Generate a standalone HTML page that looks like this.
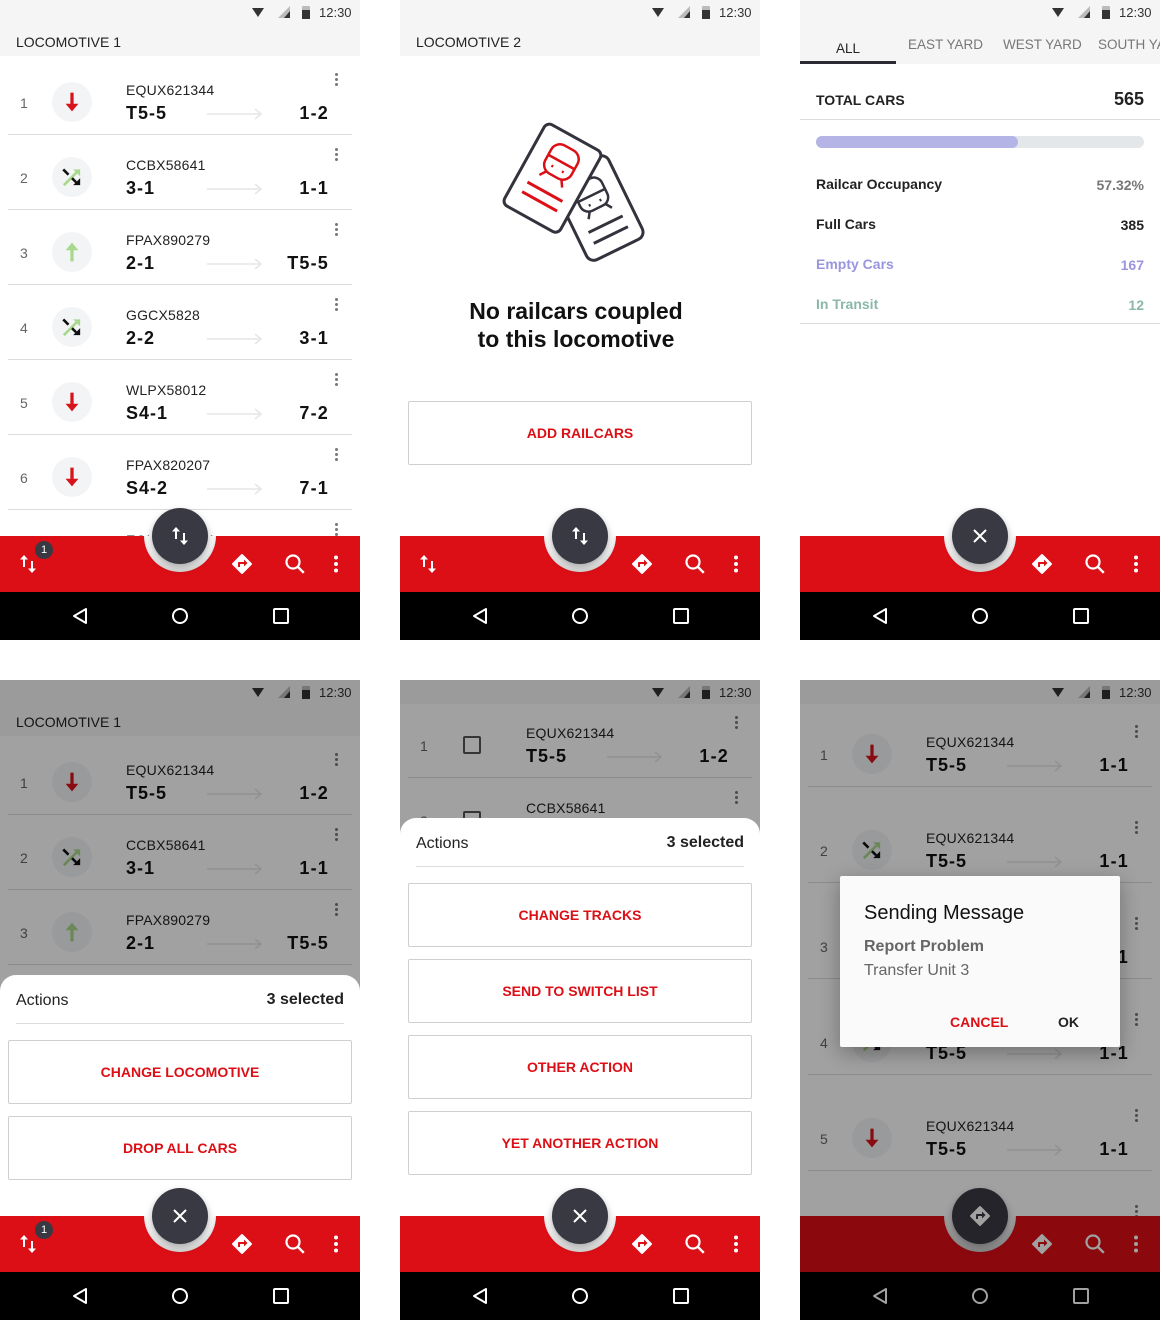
<!DOCTYPE html>
<html><head><meta charset="utf-8">
<style>
*{box-sizing:border-box;margin:0;padding:0}
body{width:1160px;height:1320px;background:#fff;position:relative;overflow:hidden;font-family:"Liberation Sans",Arial,sans-serif;color:#212121}
.s{position:absolute;width:360px;height:640px;overflow:hidden;background:#fff}
.sb{position:absolute;left:0;top:0;width:360px;height:24px;background:#f5f5f5}
.sb svg{position:absolute;left:248px;top:5px}
.sb b{position:absolute;left:319px;top:5px;font-weight:normal;font-size:13px;color:#333}
.hd{position:absolute;left:0;top:24px;width:360px;height:32px;background:#f5f5f5;font-size:14px;padding:10px 16px;color:#222}
.r{position:absolute;left:0;width:360px}
.c{position:absolute;left:0;bottom:0;width:360px;height:75px}
.c:after{content:"";position:absolute;left:8px;right:8px;bottom:0;height:1px;background:#dcdcdc}
.n{position:absolute;left:20px;top:35px;font-size:14px;color:#666}
.ic{position:absolute;left:52px;top:22px;width:40px;height:40px;border-radius:50%;background:#f3f4f6}
.ic svg{position:absolute;left:6px;top:6px;width:28px;height:28px}
.cb{position:absolute;left:63px;top:33px;width:18px;height:18px;border:2px solid #555;border-radius:2px}
.id{position:absolute;left:126px;top:22px;font-size:14px;color:#222;letter-spacing:.2px}
.bg{position:absolute;left:126px;top:43px;font-size:18px;font-weight:bold;color:#111;letter-spacing:1px}
.ds{position:absolute;right:31px;top:43px;font-size:18px;font-weight:bold;color:#111;letter-spacing:1.2px}
.ar{position:absolute;left:207px;top:48px}
.kb{position:absolute;left:335px;top:13px;width:3px;height:3px;border-radius:50%;background:#777;box-shadow:0 5px #777,0 10px #777}
.bar{position:absolute;left:0;top:536px;width:360px;height:56px;background:#dc0f16;overflow:hidden}
.notch{position:absolute;left:144px;top:-36px;width:72px;height:72px;border-radius:50%;background:#fff;box-shadow:inset 0 -3px 4px rgba(0,0,0,.15)}
.bar svg{position:absolute}
.badge{position:absolute;left:35px;top:5px;width:18px;height:18px;border-radius:50%;background:#393943;color:#fff;font-size:11px;text-align:center;line-height:18px}
.fab{position:absolute;left:152px;top:508px;width:56px;height:56px;border-radius:50%;background:#393943;box-shadow:0 4px 8px rgba(0,0,0,.35)}
.fab svg{position:absolute;left:16px;top:16px}
.nav{position:absolute;left:0;top:592px;width:360px;height:48px;background:#000}
.nav svg{position:absolute;left:0;top:0}
.dim{position:absolute;left:0;top:0;width:360px;height:640px;background:rgba(0,0,0,.37)}
.sheet{position:absolute;left:0;width:360px;height:400px;background:#fff;border-radius:16px 16px 0 0}
.sheet .t1{position:absolute;left:16px;top:17px;font-size:16px;color:#222}
.sheet .t2{position:absolute;right:16px;top:16px;font-size:16px;font-weight:bold;color:#222}
.sheet .ln{position:absolute;left:16px;right:16px;top:48px;height:1px;background:#dcdcdc}
.btn{position:absolute;left:8px;width:344px;height:64px;border:1px solid #cfcfcf;border-radius:2px;color:#dc0f16;font-size:14px;font-weight:bold;text-align:center;line-height:62px}
.tab{position:absolute;font-size:13.5px;color:#777;top:37px}
.st{position:absolute;left:16px;font-size:14px;font-weight:bold}
.sv{position:absolute;right:16px;font-size:14px;font-weight:bold}
</style></head><body>
<svg width="0" height="0" style="position:absolute">
<defs>
<symbol id="down" viewBox="0 0 24 24"><path d="M10.6 4h2.8v9.5h4.1L12 20l-5.5-6.5h4.1z" fill="#d7141c"/></symbol>
<symbol id="up" viewBox="0 0 24 24"><path d="M10.6 20h2.8v-9.5h4.1L12 4l-5.5 6.5h4.1z" fill="#a8d88c"/></symbol>
<symbol id="shuf" viewBox="0 0 24 24"><path d="M5 19L17.5 6.5" stroke="#a8d88c" stroke-width="2.2"/><path d="M13 5.5h6v6z" fill="#a8d88c"/><path d="M4.5 5.5l4.5 4.5M12 13l3.5 3.5" stroke="#111" stroke-width="2.2"/><path d="M19 19h-6l6-6z" fill="#111"/></symbol>
<symbol id="arr" viewBox="0 0 56 12"><path d="M0 6h54M48 1l6 5-6 5" fill="none" stroke="#e6e6e6" stroke-width="1.5"/></symbol>
<symbol id="swap" viewBox="0 0 24 24"><path d="M8 3L4 7.5h3V15h2V7.5h3zM16 21l4-4.5h-3V9h-2v7.5h-3z" fill="#fff"/></symbol>
<symbol id="dir" viewBox="0 0 24 24"><path d="M21.7 11.3l-9-9a1 1 0 00-1.4 0l-9 9a1 1 0 000 1.4l9 9a1 1 0 001.4 0l9-9a1 1 0 000-1.4zM14 14.5V12h-4v3H8v-4c0-.55.45-1 1-1h5V7.5l3.5 3.5z" fill="#fff"/></symbol>
<symbol id="srch" viewBox="0 0 24 24"><circle cx="10" cy="10" r="6.5" fill="none" stroke="#fff" stroke-width="2.2"/><path d="M14.8 14.8l6 6" stroke="#fff" stroke-width="2.4"/></symbol>
<symbol id="more" viewBox="0 0 24 24"><circle cx="12" cy="5.5" r="2" fill="#fff"/><circle cx="12" cy="12" r="2" fill="#fff"/><circle cx="12" cy="18.5" r="2" fill="#fff"/></symbol>
<symbol id="x" viewBox="0 0 24 24"><path d="M6 6l12 12M18 6L6 18" stroke="#fff" stroke-width="2"/></symbol>
<symbol id="stat" viewBox="0 0 70 14"><path d="M4 3h12l-6 9z" fill="#333"/><path d="M30 13h12V1z" fill="#bbb"/><path d="M36 13h6V6z" fill="#333"/><rect x="54" y="1" width="8" height="13" rx="1" fill="#bbb"/><rect x="54" y="5" width="8" height="9" fill="#333"/></symbol>
<symbol id="navi" viewBox="0 0 360 48"><path d="M86 17v14l-12-7z" fill="none" stroke="#fff" stroke-width="2" stroke-linejoin="round"/><circle cx="180" cy="24" r="7" fill="none" stroke="#fff" stroke-width="2"/><rect x="274" y="17" width="14" height="14" rx="1" fill="none" stroke="#fff" stroke-width="2"/></symbol>
</defs></svg>

<!-- SCREEN 1 -->
<div class="s" style="left:0;top:0">
<div class="sb"><svg width="70" height="14"><use href="#stat"/></svg><b>12:30</b></div>
<div class="hd">LOCOMOTIVE 1</div>
<div class="r" style="top:60px;height:75px"><div class="c"><span class="n">1</span><span class="ic"><svg><use href="#down"/></svg></span><span class="id">EQUX621344</span><span class="bg">T5-5</span><svg class="ar" width="56" height="12"><use href="#arr"/></svg><span class="ds">1-2</span><i class="kb"></i></div></div>
<div class="r" style="top:135px;height:75px"><div class="c"><span class="n">2</span><span class="ic"><svg><use href="#shuf"/></svg></span><span class="id">CCBX58641</span><span class="bg">3-1</span><svg class="ar" width="56" height="12"><use href="#arr"/></svg><span class="ds">1-1</span><i class="kb"></i></div></div>
<div class="r" style="top:210px;height:75px"><div class="c"><span class="n">3</span><span class="ic"><svg><use href="#up"/></svg></span><span class="id">FPAX890279</span><span class="bg">2-1</span><svg class="ar" width="56" height="12"><use href="#arr"/></svg><span class="ds">T5-5</span><i class="kb"></i></div></div>
<div class="r" style="top:285px;height:75px"><div class="c"><span class="n">4</span><span class="ic"><svg><use href="#shuf"/></svg></span><span class="id">GGCX5828</span><span class="bg">2-2</span><svg class="ar" width="56" height="12"><use href="#arr"/></svg><span class="ds">3-1</span><i class="kb"></i></div></div>
<div class="r" style="top:360px;height:75px"><div class="c"><span class="n">5</span><span class="ic"><svg><use href="#down"/></svg></span><span class="id">WLPX58012</span><span class="bg">S4-1</span><svg class="ar" width="56" height="12"><use href="#arr"/></svg><span class="ds">7-2</span><i class="kb"></i></div></div>
<div class="r" style="top:435px;height:75px"><div class="c"><span class="n">6</span><span class="ic"><svg><use href="#down"/></svg></span><span class="id">FPAX820207</span><span class="bg">S4-2</span><svg class="ar" width="56" height="12"><use href="#arr"/></svg><span class="ds">7-1</span><i class="kb"></i></div></div>
<div class="r" style="top:510px;height:75px"><div class="c"><span class="id">EQUX621344</span><i class="kb"></i></div></div>
<div class="bar"><div class="notch"></div><svg style="left:16px;top:16px" width="24" height="24"><use href="#swap"/></svg><div class="badge">1</div><svg style="left:230px;top:16px" width="24" height="24"><use href="#dir"/></svg><svg style="left:283px;top:16px" width="24" height="24"><use href="#srch"/></svg><svg style="left:324px;top:16px" width="24" height="24"><use href="#more"/></svg></div>
<div class="fab"><svg width="24" height="24"><use href="#swap"/></svg></div>
<div class="nav"><svg width="360" height="48"><use href="#navi"/></svg></div>
</div>

<!-- SCREEN 2 -->
<div class="s" style="left:400px;top:0">
<div class="sb"><svg width="70" height="14"><use href="#stat"/></svg><b>12:30</b></div>
<div class="hd">LOCOMOTIVE 2</div>
<svg style="position:absolute;left:0;top:0" width="360" height="300">
<g transform="translate(190,263) rotate(-26)"><rect x="0" y="-92" width="62" height="92" rx="8" fill="#fff" stroke="#33333d" stroke-width="3"/>
<rect x="16" y="-76" width="30" height="30" rx="9" fill="none" stroke="#33333d" stroke-width="2.5"/><path d="M16-60h30M24-52h2M36-52h2M22-46l-4 6M40-46l4 6" stroke="#33333d" stroke-width="2.5" fill="none"/>
<path d="M12-28h38M12-16h38" stroke="#33333d" stroke-width="3"/></g>
<g transform="translate(147,122) rotate(29)"><rect x="0" y="0" width="64" height="93" rx="6" fill="#fff" stroke="#33333d" stroke-width="3"/>
<rect x="17" y="12" width="30" height="32" rx="10" fill="none" stroke="#dc0f16" stroke-width="2.5"/><path d="M17 28h30M25 36h2M37 36h2M23 44l-4 6M41 44l4 6" stroke="#dc0f16" stroke-width="2.5" fill="none"/>
<path d="M12 62h40M12 73h40" stroke="#dc0f16" stroke-width="3"/></g>
</svg>
<div style="position:absolute;left:-4px;width:360px;top:297px;text-align:center;font-size:23px;font-weight:bold;line-height:28px;color:#111">No railcars coupled<br>to this locomotive</div>
<div class="btn" style="top:401px">ADD RAILCARS</div>
<div class="bar"><div class="notch"></div><svg style="left:16px;top:16px" width="24" height="24"><use href="#swap"/></svg><svg style="left:230px;top:16px" width="24" height="24"><use href="#dir"/></svg><svg style="left:283px;top:16px" width="24" height="24"><use href="#srch"/></svg><svg style="left:324px;top:16px" width="24" height="24"><use href="#more"/></svg></div>
<div class="fab"><svg width="24" height="24"><use href="#swap"/></svg></div>
<div class="nav"><svg width="360" height="48"><use href="#navi"/></svg></div>
</div>

<!-- SCREEN 3 -->
<div class="s" style="left:800px;top:0">
<div class="sb"><svg width="70" height="14"><use href="#stat"/></svg><b>12:30</b></div>
<div style="position:absolute;left:0;top:24px;width:360px;height:40px;background:#f5f5f5"></div>
<div class="tab" style="left:36px;top:41px;color:#222">ALL</div>
<div style="position:absolute;left:0;top:61px;width:96px;height:3px;background:#2a2a35"></div>
<div class="tab" style="left:108px">EAST YARD</div>
<div class="tab" style="left:203px">WEST YARD</div>
<div class="tab" style="left:298px;white-space:nowrap">SOUTH YARD</div>
<div class="st" style="top:92px;color:#222">TOTAL CARS</div>
<div class="sv" style="top:89px;font-size:18px;color:#222">565</div>
<div style="position:absolute;left:0;top:119px;width:360px;height:1px;background:#dcdcdc"></div>
<div style="position:absolute;left:16px;top:136px;width:328px;height:12px;border-radius:6px;background:#e3e7ea"><div style="width:202px;height:12px;border-radius:6px;background:#b4b4e6"></div></div>
<div class="st" style="top:176px;color:#222">Railcar Occupancy</div><div class="sv" style="top:177px;color:#777">57.32%</div>
<div class="st" style="top:216px;color:#222">Full Cars</div><div class="sv" style="top:217px;color:#222">385</div>
<div class="st" style="top:256px;color:#9b95e0">Empty Cars</div><div class="sv" style="top:257px;color:#9b95e0">167</div>
<div class="st" style="top:296px;color:#8ab8a8">In Transit</div><div class="sv" style="top:297px;color:#8ab8a8">12</div>
<div style="position:absolute;left:0;top:323px;width:360px;height:1px;background:#dcdcdc"></div>
<div class="bar"><div class="notch"></div><svg style="left:230px;top:16px" width="24" height="24"><use href="#dir"/></svg><svg style="left:283px;top:16px" width="24" height="24"><use href="#srch"/></svg><svg style="left:324px;top:16px" width="24" height="24"><use href="#more"/></svg></div>
<div class="fab"><svg width="24" height="24"><use href="#x"/></svg></div>
<div class="nav"><svg width="360" height="48"><use href="#navi"/></svg></div>
</div>

<!-- SCREEN 4 -->
<div class="s" style="left:0;top:680px">
<div class="sb"><svg width="70" height="14"><use href="#stat"/></svg><b>12:30</b></div>
<div class="hd">LOCOMOTIVE 1</div>
<div class="r" style="top:60px;height:75px"><div class="c"><span class="n">1</span><span class="ic"><svg><use href="#down"/></svg></span><span class="id">EQUX621344</span><span class="bg">T5-5</span><svg class="ar" width="56" height="12"><use href="#arr"/></svg><span class="ds">1-2</span><i class="kb"></i></div></div>
<div class="r" style="top:135px;height:75px"><div class="c"><span class="n">2</span><span class="ic"><svg><use href="#shuf"/></svg></span><span class="id">CCBX58641</span><span class="bg">3-1</span><svg class="ar" width="56" height="12"><use href="#arr"/></svg><span class="ds">1-1</span><i class="kb"></i></div></div>
<div class="r" style="top:210px;height:75px"><div class="c"><span class="n">3</span><span class="ic"><svg><use href="#up"/></svg></span><span class="id">FPAX890279</span><span class="bg">2-1</span><svg class="ar" width="56" height="12"><use href="#arr"/></svg><span class="ds">T5-5</span><i class="kb"></i></div></div>
<div class="dim"></div>
<div class="sheet" style="top:295px"><span class="t1">Actions</span><span class="t2">3 selected</span><div class="ln"></div>
<div class="btn" style="top:65px">CHANGE LOCOMOTIVE</div><div class="btn" style="top:141px">DROP ALL CARS</div></div>
<div class="bar"><div class="notch"></div><svg style="left:16px;top:16px" width="24" height="24"><use href="#swap"/></svg><div class="badge">1</div><svg style="left:230px;top:16px" width="24" height="24"><use href="#dir"/></svg><svg style="left:283px;top:16px" width="24" height="24"><use href="#srch"/></svg><svg style="left:324px;top:16px" width="24" height="24"><use href="#more"/></svg></div>
<div class="fab"><svg width="24" height="24"><use href="#x"/></svg></div>
<div class="nav"><svg width="360" height="48"><use href="#navi"/></svg></div>
</div>

<!-- SCREEN 5 -->
<div class="s" style="left:400px;top:680px">
<div class="sb"><svg width="70" height="14"><use href="#stat"/></svg><b>12:30</b></div>
<div class="r" style="top:23px;height:75px"><div class="c"><span class="n">1</span><span class="cb"></span><span class="id">EQUX621344</span><span class="bg">T5-5</span><svg class="ar" width="56" height="12"><use href="#arr"/></svg><span class="ds">1-2</span><i class="kb"></i></div></div>
<div class="r" style="top:98px;height:75px"><div class="c"><span class="n">2</span><span class="cb"></span><span class="id">CCBX58641</span><span class="bg">3-1</span><i class="kb"></i></div></div>
<div class="dim"></div>
<div class="sheet" style="top:138px"><span class="t1">Actions</span><span class="t2">3 selected</span><div class="ln"></div>
<div class="btn" style="top:65px">CHANGE TRACKS</div><div class="btn" style="top:141px">SEND TO SWITCH LIST</div><div class="btn" style="top:217px">OTHER ACTION</div><div class="btn" style="top:293px">YET ANOTHER ACTION</div></div>
<div class="bar"><div class="notch"></div><svg style="left:230px;top:16px" width="24" height="24"><use href="#dir"/></svg><svg style="left:283px;top:16px" width="24" height="24"><use href="#srch"/></svg><svg style="left:324px;top:16px" width="24" height="24"><use href="#more"/></svg></div>
<div class="fab"><svg width="24" height="24"><use href="#x"/></svg></div>
<div class="nav"><svg width="360" height="48"><use href="#navi"/></svg></div>
</div>

<!-- SCREEN 6 -->
<div class="s" style="left:800px;top:680px">
<div class="sb"><svg width="70" height="14"><use href="#stat"/></svg><b>12:30</b></div>
<div class="r" style="top:11px;height:96px"><div class="c"><span class="n">1</span><span class="ic"><svg><use href="#down"/></svg></span><span class="id">EQUX621344</span><span class="bg">T5-5</span><svg class="ar" width="56" height="12"><use href="#arr"/></svg><span class="ds">1-1</span><i class="kb"></i></div></div>
<div class="r" style="top:107px;height:96px"><div class="c"><span class="n">2</span><span class="ic"><svg><use href="#shuf"/></svg></span><span class="id">EQUX621344</span><span class="bg">T5-5</span><svg class="ar" width="56" height="12"><use href="#arr"/></svg><span class="ds">1-1</span><i class="kb"></i></div></div>
<div class="r" style="top:203px;height:96px"><div class="c"><span class="n">3</span><span class="ic"><svg><use href="#up"/></svg></span><span class="id">EQUX621344</span><span class="bg">T5-5</span><svg class="ar" width="56" height="12"><use href="#arr"/></svg><span class="ds">1-1</span><i class="kb"></i></div></div>
<div class="r" style="top:299px;height:96px"><div class="c"><span class="n">4</span><span class="ic"><svg><use href="#shuf"/></svg></span><span class="id">EQUX621344</span><span class="bg">T5-5</span><svg class="ar" width="56" height="12"><use href="#arr"/></svg><span class="ds">1-1</span><i class="kb"></i></div></div>
<div class="r" style="top:395px;height:96px"><div class="c"><span class="n">5</span><span class="ic"><svg><use href="#down"/></svg></span><span class="id">EQUX621344</span><span class="bg">T5-5</span><svg class="ar" width="56" height="12"><use href="#arr"/></svg><span class="ds">1-1</span><i class="kb"></i></div></div>
<div class="r" style="top:491px;height:96px"><div class="c"><span class="id">EQUX621344</span><i class="kb"></i></div></div>
<div class="bar"><div class="notch"></div><svg style="left:230px;top:16px" width="24" height="24"><use href="#dir"/></svg><svg style="left:283px;top:16px" width="24" height="24"><use href="#srch"/></svg><svg style="left:324px;top:16px" width="24" height="24"><use href="#more"/></svg></div>
<div class="fab"><svg width="24" height="24"><use href="#dir"/></svg></div>
<div class="nav"><svg width="360" height="48"><use href="#navi"/></svg></div>
<div class="dim"></div>
<div style="position:absolute;left:40px;top:196px;width:280px;height:171px;background:#fafafa;border-radius:2px;box-shadow:0 6px 20px rgba(0,0,0,.3)">
<div style="position:absolute;left:24px;top:26px;font-size:20px;color:#111">Sending Message</div>
<div style="position:absolute;left:24px;top:62px;font-size:16px;font-weight:bold;color:#666">Report Problem</div>
<div style="position:absolute;left:24px;top:86px;font-size:16px;color:#666">Transfer Unit 3</div>
<div style="position:absolute;left:110px;top:138px;font-size:14px;font-weight:bold;color:#dc0f16">CANCEL</div>
<div style="position:absolute;left:218px;top:138px;font-size:14px;font-weight:bold;color:#222">OK</div>
</div>
</div>
</body></html>
